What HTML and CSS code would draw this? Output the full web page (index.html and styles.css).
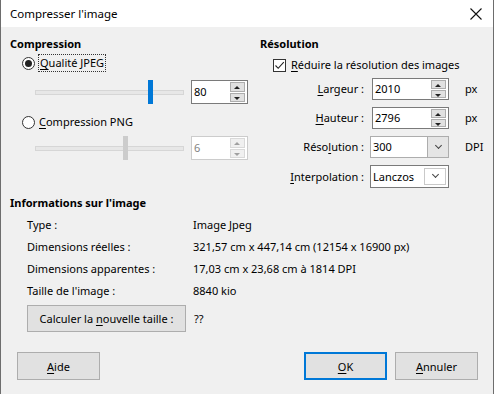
FILE: index.html
```html
<!DOCTYPE html>
<html lang="fr">
  <head>
    <meta charset="UTF-8" />
    <title>Compresser l'image</title>
    <link rel="stylesheet" href="styles.css">
  </head>
  <body>
    <div class="window">
      <div class="titlebar">
        <span>Compresser l'image</span>
        <svg class="close" width="12" height="12" viewBox="0 0 12 12">
          <path d="M0.5 0.5 L11.5 11.5 M11.5 0.5 L0.5 11.5" stroke="#111" stroke-width="1.1" />
        </svg>
      </div>

      <div class="content">
        <div class="top">
          <!-- Compression -->
          <div class="col-left">
            <h2>Compression</h2>
            <div class="radio-row">
              <span class="radio checked"></span>
              <span class="focus"><u>Q</u>ualité JPEG</span>
            </div>
            <div class="slider-row">
              <div class="slider">
                <div class="track"></div>
                <div class="thumb" style="left: 113px"></div>
              </div>
              <div class="spin">
                <span class="spin-value">80</span>
                <div class="spin-btns">
                  <span class="arrow up"></span>
                  <span class="arrow down"></span>
                </div>
              </div>
            </div>
            <div class="radio-row second">
              <span class="radio"></span>
              <span><u>C</u>ompression PNG</span>
            </div>
            <div class="slider-row disabled">
              <div class="slider">
                <div class="track"></div>
                <div class="thumb" style="left: 88px"></div>
              </div>
              <div class="spin">
                <span class="spin-value">6</span>
                <div class="spin-btns">
                  <span class="arrow up"></span>
                  <span class="arrow down"></span>
                </div>
              </div>
            </div>
          </div>

          <!-- Résolution -->
          <div class="col-right">
            <h2>Résolution</h2>
            <div class="check-row">
              <span class="checkbox">
                <svg width="11" height="11" viewBox="0 0 11 11">
                  <path d="M1.5 5.5 L4.2 8.3 L9.8 2.2" fill="none" stroke="#222" stroke-width="1.1" />
                </svg>
              </span>
              <span><u>R</u>éduire la résolution des images</span>
            </div>
            <div class="fields">
              <label><u>L</u>argeur :</label>
              <div class="spin wide">
                <span class="spin-value">2010</span>
                <div class="spin-btns">
                  <span class="arrow up"></span>
                  <span class="arrow down"></span>
                </div>
              </div>
              <span class="unit">px</span>

              <label><u>H</u>auteur :</label>
              <div class="spin wide">
                <span class="spin-value">2796</span>
                <div class="spin-btns">
                  <span class="arrow up"></span>
                  <span class="arrow down"></span>
                </div>
              </div>
              <span class="unit">px</span>

              <label>Réso<u>l</u>ution :</label>
              <div class="combo">
                <span class="spin-value">300</span>
                <span class="combo-btn"><span class="chevron"></span></span>
              </div>
              <span class="unit">DPI</span>

              <label><u>I</u>nterpolation :</label>
              <div class="combo plain">
                <span class="spin-value">Lanczos</span>
                <span class="combo-btn"><span class="chevron"></span></span>
              </div>
              <span></span>
            </div>
          </div>
        </div>

        <!-- Informations -->
        <h2 class="info-title">Informations sur l'image</h2>
        <div class="info">
          <span>Type :</span><span>Image Jpeg</span>
          <span>Dimensions réelles :</span><span>321,57 cm x 447,14 cm (12154 x 16900 px)</span>
          <span>Dimensions apparentes :</span><span>17,03 cm x 23,68 cm à 1814 DPI</span>
          <span>Taille de l'image :</span><span>8840 kio</span>
        </div>
        <div class="calc-row">
          <button class="btn calc">Calculer la <u>n</u>ouvelle taille :</button>
          <span>??</span>
        </div>

        <div class="footer">
          <button class="btn"><u>A</u>ide</button>
          <div class="footer-right">
            <button class="btn default"><u>O</u>K</button>
            <button class="btn"><u>A</u>nnuler</button>
          </div>
        </div>
      </div>
    </div>
  </body>
</html>
```

FILE: styles.css
```css
body {
  margin: 0;
  padding: 0;
  background: #fff;
  font-family: "Noto Sans", "Open Sans", sans-serif;
  font-size: 11px;
  line-height: 16px;
  color: #000;
}

u {
  text-decoration: underline;
  text-underline-offset: 2px;
}

.window {
  width: 494px;
  height: 394px;
  box-sizing: border-box;
  border-left: 1px solid #6d6d6d;
  border-right: 1px solid #6d6d6d;
  background: #f0f0f0;
}

.titlebar {
  height: 27px;
  background: #fff;
  display: flex;
  align-items: center;
  justify-content: space-between;
  padding: 0 11px 0 9px;
  font-size: 11.5px;
}

.content {
  padding: 9px 0 0 9px;
}

h2 {
  font-size: 11px;
  font-weight: bold;
  margin: 0;
  line-height: 16px;
}

.top {
  display: grid;
  grid-template-columns: 250px 1fr;
}

/* radios */
.radio-row {
  display: flex;
  align-items: center;
  gap: 4px;
  margin: 3px 0 0 12px;
  height: 16px;
}

.radio-row.second {
  margin-top: 10px;
}

.radio {
  width: 11px;
  height: 11px;
  border: 1px solid #333;
  border-radius: 50%;
  background: #fff;
  position: relative;
}

.radio.checked::after {
  content: "";
  position: absolute;
  left: 2px;
  top: 2px;
  width: 7px;
  height: 7px;
  border-radius: 50%;
  background: #222;
}

.focus {
  outline: 1px dotted #333;
  outline-offset: 0;
  padding: 0 1px;
}

/* sliders */
.slider-row {
  display: flex;
  align-items: center;
  margin: 9px 0 0 25px;
  height: 24px;
}

.slider-row.disabled {
  margin-top: 6px;
}

.slider {
  position: relative;
  width: 149px;
  height: 24px;
  margin-right: 7px;
}

.track {
  position: absolute;
  left: 0;
  right: 0;
  top: 10px;
  height: 3px;
  background: #e7e7e7;
  border: 1px solid #d6d6d6;
}

.thumb {
  position: absolute;
  top: 0;
  width: 5px;
  height: 24px;
  background: #0078d7;
}

.disabled .thumb {
  background: #ccc;
}

/* spin boxes */
.spin,
.combo {
  display: flex;
  align-items: stretch;
  height: 22px;
  box-sizing: border-box;
  border: 1px solid #7a7a7a;
  background: #fff;
}

.slider-row .spin {
  width: 57px;
  height: 24px;
}

.spin-value {
  flex: 1;
  display: flex;
  align-items: center;
  padding-left: 2px;
}

.spin-btns {
  width: 15px;
  display: flex;
  flex-direction: column;
  gap: 1px;
  padding: 1px 2px 1px 0;
}

.arrow {
  flex: 1;
  border: 1px solid #adadad;
  background: #e1e1e1;
  position: relative;
}

.arrow::after {
  content: "";
  position: absolute;
  left: 3px;
  border-left: 3px solid transparent;
  border-right: 3px solid transparent;
}

.arrow.up::after {
  top: 3px;
  border-bottom: 3px solid #222;
}

.arrow.down::after {
  top: 3px;
  border-top: 3px solid #222;
}

.disabled .spin {
  border-color: #ccc;
}

.disabled .spin-value {
  color: #838383;
}

.disabled .arrow {
  border-color: #d9d9d9;
  background: #f0f0f0;
}

.disabled .arrow.up::after {
  border-bottom-color: #a0a0a0;
}

.disabled .arrow.down::after {
  border-top-color: #a0a0a0;
}

/* résolution */
.check-row {
  display: flex;
  align-items: center;
  gap: 5px;
  margin: 5px 0 0 13px;
  height: 16px;
}

.checkbox {
  width: 11px;
  height: 11px;
  border: 1px solid #333;
  background: #fff;
  display: flex;
}

.fields {
  display: grid;
  grid-template-columns: 104px 77px 1fr;
  column-gap: 8px;
  row-gap: 7px;
  align-items: center;
  margin-top: 5px;
}

.fields label {
  text-align: right;
}

.combo {
  width: 79px;
  margin-left: -2px;
  height: 22px;
  border-color: #adadad;
}

.combo.plain {
  border-color: #7a7a7a;
  height: 23px;
}

.combo-btn {
  width: 20px;
  background: #e5e5e5;
  border-left: 1px solid #adadad;
  display: flex;
  align-items: center;
  justify-content: center;
}

.combo.plain .combo-btn {
  background: #fff;
  margin: 2px 2px 2px 0;
  border: 1px solid #c9c9c9;
}

.chevron {
  width: 4px;
  height: 4px;
  border-right: 1px solid #444;
  border-bottom: 1px solid #444;
  transform: translateY(-2px) rotate(45deg);
}

.unit {
  padding-left: 8px;
}

/* informations */
.info-title {
  margin-top: 7px;
}

.info {
  display: grid;
  grid-template-columns: 166px 1fr;
  row-gap: 6px;
  margin: 6px 0 0 17px;
}

.calc-row {
  display: flex;
  align-items: center;
  gap: 8px;
  margin: 6px 0 0 17px;
}

.btn {
  font-family: inherit;
  font-size: 11px;
  color: #000;
  background: #e1e1e1;
  border: 1px solid #adadad;
  width: 83px;
  height: 28px;
  padding: 0;
}

.btn.calc {
  width: 159px;
  height: 27px;
}

.btn.default {
  border: 2px solid #0078d7;
}

.footer {
  display: flex;
  justify-content: space-between;
  margin: 20px 15px 0 7px;
}

.footer-right {
  display: flex;
  gap: 8px;
}
```
